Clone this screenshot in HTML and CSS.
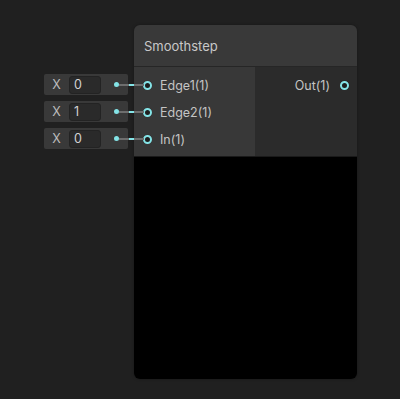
FILE: index.html
```html
<!DOCTYPE html>
<html lang="en">
<head>
  <meta charset="UTF-8" />
  <meta name="viewport" content="width=device-width, initial-scale=1.0"/>
  <title>Smoothstep Node</title>
  <link rel="stylesheet" href="styles.css">
</head>
<body>

  <div class="canvas">

    <!-- inline default values for the inputs -->
    <div class="defaults">
      <div class="field-row">
        <span class="axis">X</span>
        <span class="value">0</span>
        <span class="dot"></span>
        <span class="wire"></span>
      </div>
      <div class="field-row">
        <span class="axis">X</span>
        <span class="value">1</span>
        <span class="dot"></span>
        <span class="wire"></span>
      </div>
      <div class="field-row">
        <span class="axis">X</span>
        <span class="value">0</span>
        <span class="dot"></span>
        <span class="wire"></span>
      </div>
    </div>

    <div class="node">
      <div class="node-title">Smoothstep</div>
      <div class="node-ports">
        <div class="port-col inputs">
          <div class="port"><span class="port-circle"></span><span class="port-label">Edge1(1)</span></div>
          <div class="port"><span class="port-circle"></span><span class="port-label">Edge2(1)</span></div>
          <div class="port"><span class="port-circle"></span><span class="port-label">In(1)</span></div>
        </div>
        <div class="port-col outputs">
          <div class="port out"><span class="port-label">Out(1)</span><span class="port-circle"></span></div>
        </div>
      </div>
      <div class="preview"></div>
    </div>

  </div>

</body>
</html>
```

FILE: styles.css
```css
:root {
  --bg: #202020;
  --header: #393939;
  --inputs: #383838;
  --outputs: #2b2b2b;
  --text: #c4c4c4;
  --float: #84e4e7;
}

body {
  margin: 0;
  background: var(--bg);
  font-family: 'Inter', 'Noto Sans', sans-serif;
  font-size: 12px;
  color: var(--text);
  width: 400px;
  height: 399px;
  overflow: hidden;
}

.canvas {
  display: flex;
  align-items: flex-start;
  padding: 25px 0 0 44px;
}

.defaults {
  display: flex;
  flex-direction: column;
  gap: 6px;
  margin-top: 49px;
  width: 84px;
  flex-shrink: 0;
}

.field-row {
  display: flex;
  align-items: center;
  height: 21px;
  background: #393939;
  border-radius: 2px;
}

.field-row > span {
  flex-shrink: 0;
}

.axis {
  width: 25px;
  text-align: center;
  font-size: 12.5px;
  color: #bdbdbd;
}

.value {
  width: 32px;
  height: 18px;
  line-height: 16px;
  box-sizing: border-box;
  padding-left: 4px;
  background: #2a2a2a;
  border: 1px solid #232323;
  border-radius: 3px;
  color: #d2d2d2;
  font-size: 12.5px;
}

.dot {
  width: 5px;
  height: 5px;
  margin-left: 13px;
  border-radius: 50%;
  background: var(--float);
}

.wire {
  position: relative;
  z-index: 1;
  width: 25px;
  height: 2px;
  background: #6e6e6e;
}

.wire::after {
  content: "";
  position: absolute;
  left: 10px;
  top: 0;
  width: 5px;
  height: 2px;
  background: var(--float);
}

.node {
  margin-left: 6px;
  width: 223px;
  border-radius: 6px;
  overflow: hidden;
  box-shadow: 0 0 3px rgba(0, 0, 0, 0.35);
}

.node-title {
  height: 41px;
  line-height: 42px;
  padding-left: 10px;
  background: var(--header);
  border-bottom: 1px solid #262626;
  font-size: 13px;
  color: #c8c8c8;
}

.node-ports {
  display: flex;
  height: 90px;
  border-bottom: 1px solid #1a1a1a;
  box-sizing: border-box;
}

.port-col {
  padding-top: 5px;
}

.port-col.inputs {
  width: 121px;
  background: var(--inputs);
}

.port-col.outputs {
  flex: 1;
  background: var(--outputs);
}

.port {
  display: flex;
  align-items: center;
  height: 27px;
  padding-left: 9px;
}

.port.out {
  justify-content: flex-end;
  padding-left: 0;
  padding-right: 8px;
}

.port-circle {
  width: 9px;
  height: 9px;
  box-sizing: border-box;
  border: 2px solid var(--float);
  border-radius: 50%;
  background: #1e1e1e;
}

.port-label {
  margin-left: 8px;
  font-size: 12.5px;
  color: var(--text);
}

.port.out .port-label {
  margin-left: 0;
  margin-right: 10px;
}

.preview {
  height: 222px;
  background: #000;
}
```
